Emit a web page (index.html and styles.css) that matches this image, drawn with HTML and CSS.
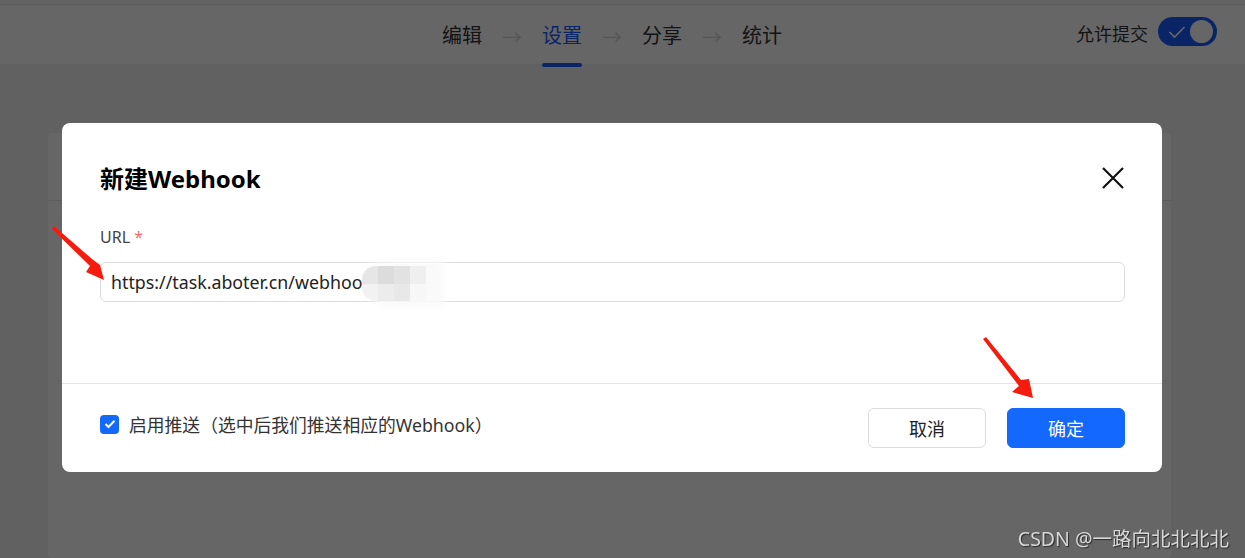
FILE: index.html
```html
<!DOCTYPE html>
<html lang="zh-CN">
<head>
    <meta charset="UTF-8">
    <meta name="viewport" content="width=device-width, initial-scale=1.0">
    <title>新建Webhook</title>
    <link rel="stylesheet" href="styles.css">
</head>
<body>
    <div class="topbar">
        <div class="steps">
            <span class="step">编辑</span>
            <span class="step-arrow">&rarr;</span>
            <span class="step active">设置</span>
            <span class="step-arrow">&rarr;</span>
            <span class="step">分享</span>
            <span class="step-arrow">&rarr;</span>
            <span class="step">统计</span>
        </div>
        <div class="allow">
            <span>允许提交</span>
            <span class="switch">
                <svg class="switch-check" width="18" height="14" viewBox="0 0 18 14">
                    <path d="M1.5 7 L6.5 12 L16.5 2" fill="none" stroke="#fff" stroke-width="1.6"/>
                </svg>
                <span class="switch-knob"></span>
            </span>
        </div>
    </div>

    <div class="page">
        <div class="card">
            <div class="card-head"></div>
        </div>
    </div>

    <div class="mask"></div>

    <div class="modal">
        <div class="modal-body">
            <div class="modal-title">
                <h2>新建Webhook</h2>
                <svg class="close" width="22" height="22" viewBox="0 0 22 22">
                    <path d="M1 1 L21 21 M21 1 L1 21" stroke="#111" stroke-width="2.2" fill="none"/>
                </svg>
            </div>
            <label class="field-label">URL <span class="req">*</span></label>
            <div class="input">
                <span>https://task.aboter.cn/webhoo</span>
                <span class="mosaic">
                    <i style="background:#e6e6e6"></i><i style="background:#dcdcdc"></i><i style="background:#e2e2e2"></i><i style="background:#efefef"></i>
                    <i style="background:#f2f2f2"></i><i style="background:#ececec"></i><i style="background:#e8e8e8"></i><i style="background:#f7f7f7"></i>
                </span>
            </div>
        </div>
        <div class="modal-foot">
            <label class="check">
                <span class="check-box">
                    <svg width="12" height="10" viewBox="0 0 12 10">
                        <path d="M1.5 5 L4.5 8 L10.5 1.8" fill="none" stroke="#fff" stroke-width="2"/>
                    </svg>
                </span>
                启用推送（选中后我们推送相应的Webhook）
            </label>
            <div class="buttons">
                <button class="btn">取消</button>
                <button class="btn primary">确定</button>
            </div>
        </div>
    </div>

    <svg class="arrows" width="1245" height="558" viewBox="0 0 1245 558">
        <polygon points="54,226 92,259 100,265 104,280 86,272 90,266 52,229" fill="#f51b0f"/>
        <polygon points="986,337 1021,380 1029,379 1033,398 1012,392 1019,386 983,339" fill="#f51b0f"/>
    </svg>

    <div class="watermark">CSDN @一路向北北北北</div>
</body>
</html>
```

FILE: styles.css
```css
* {
    box-sizing: border-box;
}
body {
    margin: 0;
    font-family: "Noto Sans", "Noto Sans CJK SC", sans-serif;
    background-color: #f2f3f5;
    height: 558px;
    overflow: hidden;
    color: #333;
}
.topbar {
    height: 64px;
    background-color: #fff;
    border-top: 4px solid #fafafa;
    box-shadow: inset 0 1px 0 #e8e8e8;
    display: flex;
    align-items: center;
    justify-content: center;
    position: relative;
}
.steps {
    display: flex;
    align-items: center;
    height: 60px;
    margin-left: -21px;
}
.step {
    font-size: 20px;
    color: #333;
    height: 60px;
    line-height: 64px;
    position: relative;
}
.step.active {
    color: #1a5cff;
}
.step.active::after {
    content: "";
    position: absolute;
    left: 0;
    right: 0;
    bottom: -3px;
    height: 4px;
    border-radius: 2px;
    background-color: #1a5cff;
}
.step-arrow {
    width: 60px;
    text-align: center;
    font-size: 20px;
    color: #d6d6d6;
    padding-top: 4px;
}
.allow {
    position: absolute;
    right: 28px;
    top: 13px;
    display: flex;
    align-items: center;
    gap: 10px;
    font-size: 18px;
    color: #333;
}
.allow > span:first-child {
    padding-top: 3px;
}
.switch {
    width: 59px;
    height: 29px;
    border-radius: 15px;
    background-color: #1a5cff;
    position: relative;
    display: inline-block;
}
.switch-check {
    position: absolute;
    left: 10px;
    top: 8px;
}
.switch-knob {
    position: absolute;
    right: 4px;
    top: 3px;
    width: 23px;
    height: 23px;
    border-radius: 50%;
    background-color: #fff;
}
.page {
    padding: 69px 0 0 48px;
}
.card {
    width: 1123px;
    height: 425px;
    background-color: #fff;
    border-radius: 4px;
}
.card-head {
    height: 68px;
    border-bottom: 1px solid #e6e6e6;
}
.mask {
    position: fixed;
    inset: 0;
    background-color: rgba(0, 0, 0, 0.6);
}
.modal {
    position: fixed;
    left: 62px;
    top: 123px;
    width: 1100px;
    height: 349px;
    background-color: #fff;
    border-radius: 8px;
    display: flex;
    flex-direction: column;
}
.modal-body {
    padding: 36px 37px 0 38px;
    height: 261px;
    border-bottom: 1px solid #e5e5e5;
}
.modal-title {
    display: flex;
    align-items: center;
    justify-content: space-between;
    height: 36px;
}
.modal-title h2 {
    margin: 0;
    font-size: 24px;
    font-weight: 700;
    color: #000;
}
.close {
    margin-right: 1px;
    margin-top: 1px;
}
.field-label {
    display: block;
    margin-top: 30px;
    font-size: 16px;
    line-height: 24px;
    color: #444;
}
.req {
    color: #f56c6c;
}
.input {
    margin-top: 13px;
    height: 40px;
    border: 1px solid #dcdcdc;
    border-radius: 6px;
    padding: 0 10px;
    display: flex;
    align-items: center;
    font-size: 17.8px;
    color: #222;
}
.mosaic {
    display: grid;
    grid-template-columns: repeat(4, 16px);
    grid-template-rows: 18px 17px;
    margin-top: 2px;
    border-radius: 14px 0 0 14px;
    overflow: hidden;
    box-shadow: 12px 0 10px 6px #fafafa;
}
.mosaic i {
    display: block;
}
.modal-foot {
    flex: 1;
    display: flex;
    align-items: center;
    justify-content: space-between;
    padding: 0 37px 0 38px;
}
.check {
    display: flex;
    align-items: center;
    gap: 10px;
    font-size: 17.8px;
    color: #333;
    margin-top: -8px;
}
.check-box {
    width: 19px;
    height: 19px;
    border-radius: 4px;
    background-color: #1268ff;
    display: flex;
    align-items: center;
    justify-content: center;
}
.buttons {
    display: flex;
    gap: 21px;
}
.btn {
    width: 118px;
    height: 40px;
    border: 1px solid #dcdcdc;
    border-radius: 6px;
    background-color: #fff;
    font-family: "Noto Sans", "Noto Sans CJK SC", sans-serif;
    font-size: 18px;
    color: #222;
    cursor: pointer;
}
.btn.primary {
    background-color: #1268ff;
    border-color: #1268ff;
    color: #fff;
}
.arrows {
    position: fixed;
    left: 0;
    top: 0;
    pointer-events: none;
}
.watermark {
    position: fixed;
    right: 16px;
    bottom: 6px;
    font-size: 19.5px;
    color: #d8d8d8;
    text-shadow: 1px 1px 1px #2a2a2a;
}
```
